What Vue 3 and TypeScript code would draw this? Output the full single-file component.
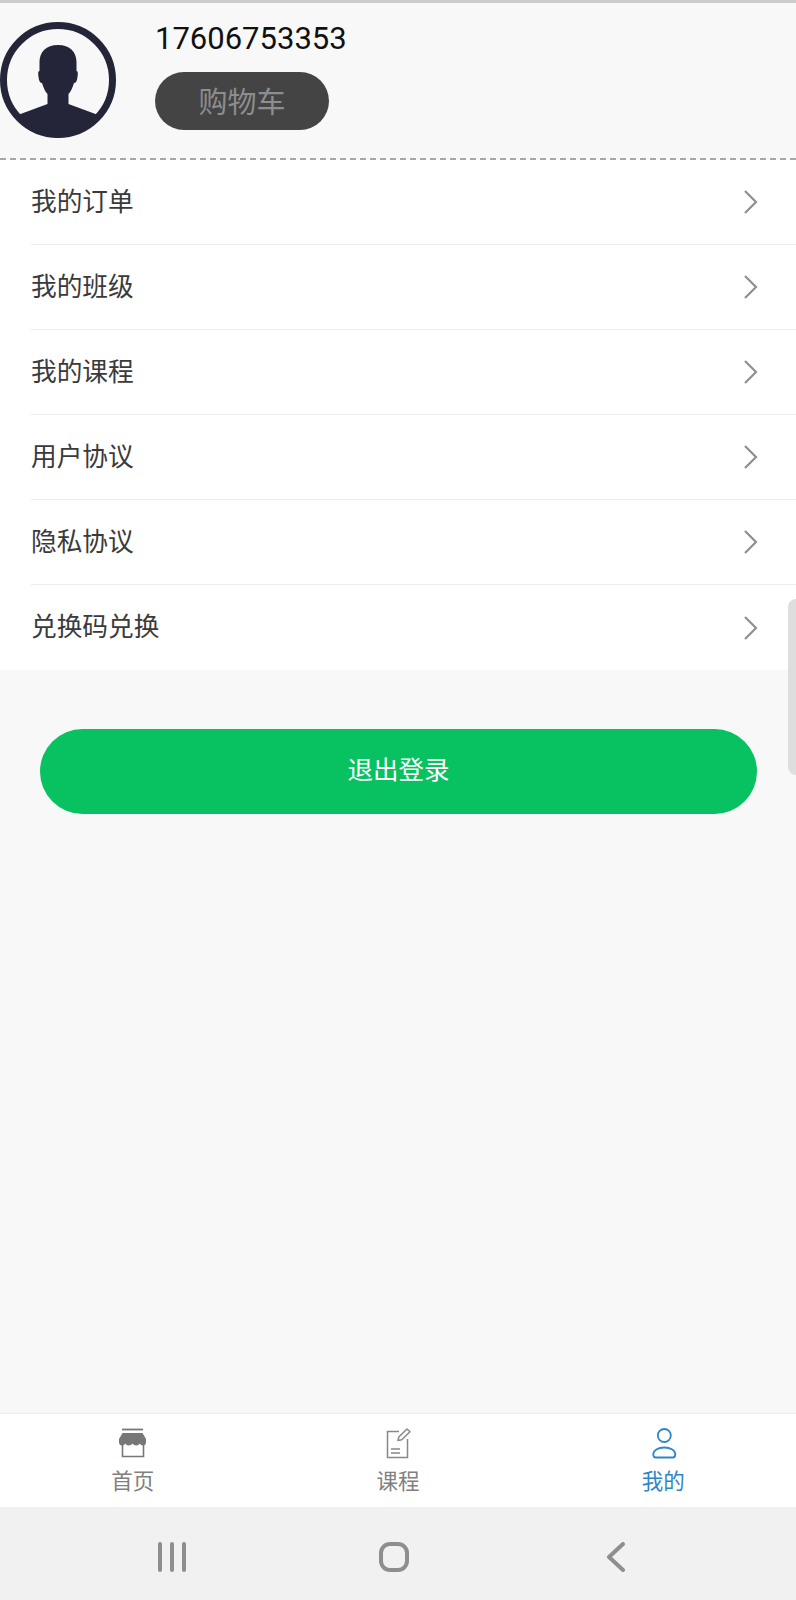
<script setup lang="ts">
interface ITab {
  key: string;
  label: string;
}

const menuItems: string[] = ['我的订单', '我的班级', '我的课程', '用户协议', '隐私协议', '兑换码兑换'];

const tabs: ITab[] = [
  { key: 'home', label: '首页' },
  { key: 'course', label: '课程' },
  { key: 'mine', label: '我的' },
];
</script>

<template>
  <div class="page">
    <div class="status-line"></div>

    <header class="profile">
      <svg class="avatar" viewBox="0 0 116 116" aria-hidden="true">
        <defs>
          <clipPath id="avatar-clip"><circle cx="58" cy="58" r="58" /></clipPath>
        </defs>
        <circle cx="58" cy="58" r="54.5" fill="#f8f8f8" stroke="#25253a" stroke-width="7" />
        <g clip-path="url(#avatar-clip)" fill="#25253a">
          <path d="M58 23c-12 0-18.500 7-18.500 17v9c-1.500 0-1.500 2-1 6 .5 4 1.500 6 3.500 6 1.500 5 3.500 9 5.500 11v10l-27 10-3 3 40.500 22 40.500-22-3-3-27-10V72c2-2 4-6 5.500-11 2 0 3-2 3.500-6 .5-4 .5-6-1-6v-9c0-10-6.500-17-18.500-17z" />
        </g>
      </svg>
      <div class="profile-info">
        <div class="phone">17606753353</div>
        <button class="cart-btn" type="button">购物车</button>
      </div>
    </header>

    <ul class="menu">
      <li v-for="item in menuItems" :key="item" class="menu-item">
        <div class="menu-row">
          <span class="menu-text">{{ item }}</span>
          <svg class="chevron" viewBox="0 0 16 26" aria-hidden="true">
            <path d="M2 2l11 11L2 24" fill="none" stroke="#8f8f8f" stroke-width="2.200" />
          </svg>
        </div>
      </li>
    </ul>

    <main class="content">
      <button class="logout-btn" type="button">退出登录</button>
    </main>

    <nav class="tabbar">
      <div
        v-for="tab in tabs"
        :key="tab.key"
        class="tab"
        :class="{ 'tab-active': tab.key === 'mine' }"
      >
        <svg class="tab-icon" viewBox="0 0 32 32" aria-hidden="true">
          <template v-if="tab.key === 'home'">
            <path d="M5 1.500h21" stroke="#77777a" stroke-width="1.800" fill="none" />
            <path d="M5.500 5h20l3.500 6v3.500c0 1.500-1 3-3 3-1.500 0-2.500-.7-3.200-2-.8 1.300-2 2-3.600 2-1.500 0-2.800-.7-3.700-2-.9 1.300-2.200 2-3.700 2-1.600 0-2.800-.7-3.600-2-.7 1.300-1.700 2-3.200 2-2 0-3-1.500-3-3V11z" fill="#77777a" />
            <path d="M5.500 16v12.500h21V16" fill="none" stroke="#77777a" stroke-width="1.600" />
          </template>
          <template v-else-if="tab.key === 'course'">
            <path d="M17 3.500H5.500v26h20V11" fill="none" stroke="#888888" stroke-width="1.500" />
            <path d="M16 12.500l.8-3.500L25 1l3 2.800-8.300 8z" fill="none" stroke="#888888" stroke-width="1.500" stroke-linejoin="round" />
            <path d="M9 21h9M9 25h9" stroke="#888888" stroke-width="1.500" fill="none" />
          </template>
          <template v-else>
            <circle cx="17.300" cy="7.500" r="6.500" fill="none" stroke="#2f86c6" stroke-width="1.800" />
            <path d="M17.300 19.500c-6.500 0-11 2.900-11 6.700 0 2 1 3.300 2.500 3.300h17c1.500 0 2.500-1.300 2.500-3.300 0-3.800-4.500-6.700-11-6.700z" fill="none" stroke="#2f86c6" stroke-width="1.800" />
          </template>
        </svg>
        <span class="tab-label">{{ tab.label }}</span>
      </div>
    </nav>

    <div class="system-nav">
      <svg class="nav-icon" viewBox="0 0 30 30" aria-hidden="true">
        <path d="M3 2v26M15 2v26M27 2v26" stroke="#8e8e8e" stroke-width="4" stroke-linecap="round" fill="none" />
      </svg>
      <svg class="nav-icon" viewBox="0 0 30 30" aria-hidden="true">
        <rect x="2" y="2" width="26" height="26" rx="9" fill="none" stroke="#8e8e8e" stroke-width="4" />
      </svg>
      <svg class="nav-icon" viewBox="0 0 30 30" aria-hidden="true">
        <path d="M22 2L8 15l14 13" stroke="#8e8e8e" stroke-width="4" stroke-linecap="round" stroke-linejoin="round" fill="none" />
      </svg>
    </div>

    <div class="scroll-thumb"></div>
  </div>
</template>

<style>
html,
body {
  margin: 0;
  padding: 0;
}
</style>

<style scoped>
.page {
  position: relative;
  display: flex;
  flex-direction: column;
  width: 796px;
  height: 1600px;
  overflow: hidden;
  background: #f8f8f8;
  font-family: Roboto, "Noto Sans CJK SC", sans-serif;
}
.status-line {
  height: 3px;
  background: #cccccc;
}
.profile {
  display: flex;
  align-items: flex-start;
  height: 157px;
  box-sizing: border-box;
  padding-top: 19px;
  border-bottom: 2px dashed #a8a8a8;
}
.avatar {
  width: 116px;
  height: 116px;
  flex: none;
}
.profile-info {
  margin-left: 39px;
  margin-top: -1px;
}
.phone {
  font-size: 31px;
  line-height: 36px;
  color: #111111;
}
.cart-btn {
  display: block;
  width: 174px;
  height: 58px;
  margin-top: 15px;
  padding: 0 0 2px;
  border: none;
  border-radius: 29px;
  background: #444444;
  color: #8d8d8d;
  font-family: inherit;
  font-size: 29px;
}
.menu {
  margin: 0;
  padding: 0;
  list-style: none;
  background: #ffffff;
}
.menu-item {
  height: 85px;
  padding-left: 31px;
}
.menu-row {
  display: flex;
  align-items: center;
  justify-content: space-between;
  height: 85px;
  box-sizing: border-box;
  padding-right: 37px;
  border-bottom: 1px solid #ececec;
}
.menu-item:last-child .menu-row {
  border-bottom: none;
}
.menu-text {
  margin-bottom: 6px;
  font-size: 25.700px;
  color: #3a3a3a;
}
.chevron {
  width: 16px;
  height: 26px;
}
.content {
  flex: 1;
  padding: 59px 39px 0 40px;
}
.logout-btn {
  display: block;
  width: 100%;
  height: 85px;
  padding: 0 0 8px;
  border: none;
  border-radius: 43px;
  background: #08c160;
  color: #ffffff;
  font-family: inherit;
  font-size: 25.500px;
}
.tabbar {
  display: grid;
  grid-template-columns: repeat(3, 1fr);
  height: 94px;
  box-sizing: border-box;
  border-top: 1px solid #ececec;
  background: #ffffff;
}
.tab {
  display: flex;
  flex-direction: column;
  align-items: center;
  padding-top: 14px;
  color: #808080;
}
.tab-active {
  color: #2f86c6;
}
.tab-icon {
  width: 32px;
  height: 32px;
}
.tab-label {
  margin-top: 7px;
  font-size: 21.500px;
  line-height: 30px;
}
.system-nav {
  display: flex;
  align-items: center;
  gap: 192px;
  height: 93px;
  box-sizing: border-box;
  padding-left: 157px;
  padding-top: 6px;
  background: #f1f1f1;
}
.nav-icon {
  width: 30px;
  height: 30px;
}
.scroll-thumb {
  position: absolute;
  top: 599px;
  right: 0;
  width: 8px;
  height: 176px;
  border-radius: 8px 0 0 8px;
  background: #dedede;
}
</style>
